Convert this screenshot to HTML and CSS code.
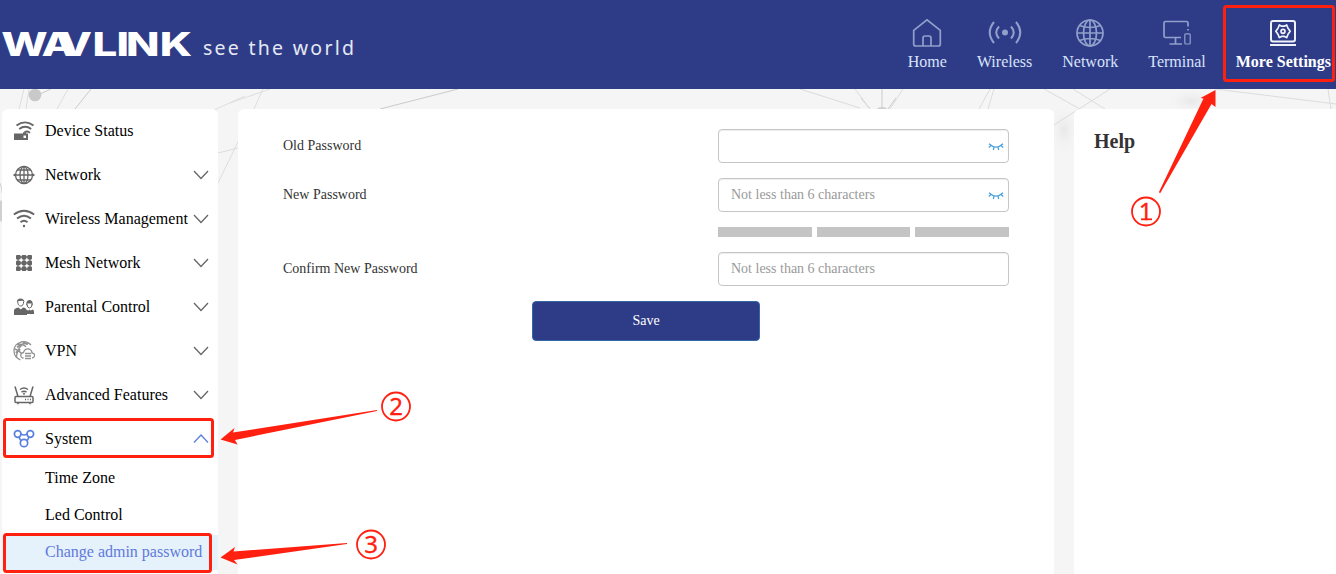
FILE: index.html
```html
<!DOCTYPE html>
<html lang="en">
<head>
<meta charset="utf-8">
<title>WAVLINK</title>
<link rel="stylesheet" href="styles.css">
</head>
<body>
<svg class="backdrop" viewBox="0 0 1336 574" aria-hidden="true">
  <defs><radialGradient id="haze"><stop offset="0" stop-color="#e8e8e8"/><stop offset="1" stop-color="#f4f4f4" stop-opacity="0"/></radialGradient></defs>
  <ellipse cx="1192" cy="101" rx="26" ry="14" fill="url(#haze)"/>
  <ellipse cx="1064" cy="130" rx="16" ry="26" fill="url(#haze)"/>
  <g fill="none" stroke="#dedede">
    <path d="M24 89 19 109M29 89 26 109M68 89 57 109M263 89 254 109 218 183M218 153 238 148M230 103 270 89M214 110 245 96"/>
    <path stroke="#cbcbcb" d="M91 89 75 109M40 94 51 89M380 109 458 89M861 98 870 109M896 98 888 109M882 89V109"/>
    <path d="M1044 89 1080 109M1073 89 1105 109M1054 125 1110 89M1328 89 1331 109M1215 89 1336 104M903 89 890 109M855 89 870 109M990 89 979 109M994 89 988 109M800 89 860 108" stroke="#dcdcdc"/>
  </g>
  <circle cx="35" cy="95" r="6.3" fill="#c9c9c9"/><circle cx="882" cy="115" r="8" fill="#cfcfcf"/>
  <path d="M0 183q2 4 2 10M0 201h2v20H0z" fill="#c9c9c9" stroke="#d6d6d6"/>
</svg>

<header class="header">
  <svg class="logo" width="360" height="40" viewBox="0 24 360 40">
    <text class="brand" transform="scale(1.33 1)" y="55.700" x="1 31.200 43.800 69.500 87.600 94.700 120.200">W<tspan class="cut">A</tspan>VLINK</text>
    <text class="tagline" x="203" y="54.500" textLength="151" lengthAdjust="spacing">see the world</text>
  </svg>
  <nav class="nav">
    <a class="nav-item"><svg width="30" height="30" viewBox="0 0 30 30"><path d="M1.700 12.400 15 1.900l13.300 10.500V26q0 2-2 2H3.700q-2 0-2-2zM11 28V20q0-2 2-2h4q2 0 2 2v8"/></svg>Home</a>
    <a class="nav-item"><svg width="34" height="30" viewBox="0 0 34 30"><g stroke-width="2"><path d="M6 4Q-2.500 14.500 6 25M11 8.500Q5.500 14.500 11 20.500M28 4Q36.500 14.500 28 25M23 8.500Q28.500 14.500 23 20.500"/></g><circle class="solid" cx="17" cy="14.500" r="3"/></svg>Wireless</a>
    <a class="nav-item"><svg width="30" height="30" viewBox="0 0 30 30"><circle cx="15" cy="15" r="13"/><ellipse cx="15" cy="15" rx="6.500" ry="13"/><path d="M15 2v26M2 15h26M4.500 7.500q10.500 4 21 0M4.500 22.500q10.500-4 21 0"/></svg>Network</a>
    <a class="nav-item"><svg width="30" height="30" viewBox="0 0 30 30"><path d="M26 8.500V5q0-1.500-1.500-1.500H3.500Q2 3.500 2 5v13q0 1.500 1.500 1.500H19M13.500 19.500V26M7.500 26H20M26 11v1.500"/><rect x="22.800" y="15.800" width="5.400" height="10.200" rx="1" stroke-width="1.200"/></svg>Terminal</a>
    <a class="nav-item current"><svg width="30" height="30" viewBox="0 0 30 30"><g stroke-width="2"><rect x="3" y="3" width="24" height="20.500" rx="2"/><path d="M2 27h26"/><path stroke-width="1.700" stroke-linejoin="round" d="M11.300 7 13.600 8.200h2.800L18.700 7l1.300 3.300 2.200 3-2.200 3-1.300 3.300-2.300-1.200h-2.800l-2.300 1.200L10 16.300l-2.200-3 2.200-3z"/><circle cx="15" cy="13.300" r="2" stroke-width="1.700"/></g></svg>More Settings</a>
  </nav>
</header>

<main class="layout">
  <aside class="sidebar">
    <a class="item"><svg class="ico" viewBox="0 0 22 22"><path d="M3.500 5.500Q12-.8 20.500 5.500M6.200 9q6-4.500 12 0M11.500 12.300q3-2 5.500.500" stroke-width="1.900"/><path class="fill" fill-rule="evenodd" d="M1 13.500h9v-1.200h3v1.200h2V20H1zM10.500 15.500V18H13v-2.500z"/></svg>Device Status</a>
    <a class="item"><svg class="ico" viewBox="0 0 22 22"><circle cx="11" cy="11" r="8.500"/><ellipse cx="11" cy="11" rx="4" ry="8.500"/><path d="M11 2v18M2 11h18M4 6h14M4 16h14"/><circle class="fill" cx="1.700" cy="11" r="1.300"/><circle class="fill" cx="20.300" cy="11" r="1.300"/></svg>Network<svg class="chev" viewBox="0 0 16 10"><path d="m1 1 7 7.500L15 1"/></svg></a>
    <a class="item"><svg class="ico" viewBox="0 0 22 22"><path stroke-width="1.800" d="M.8 6.500q10.200-7.500 20.400 0M4 10.500q7-5.500 14 0M7.500 14.300q3.500-3 7 0"/><circle class="fill" cx="11" cy="18" r="1.200"/></svg>Wireless Management<svg class="chev" viewBox="0 0 16 10"><path d="m1 1 7 7.500L15 1"/></svg></a>
    <a class="item"><svg class="ico" viewBox="0 0 22 22"><path d="M5 5h12v12H5zM5 11h12M11 5v12"/><g class="fill"><rect x="3" y="3" width="4.600" height="4.600" rx="1"/><rect x="8.700" y="3" width="4.600" height="4.600" rx="1"/><rect x="14.400" y="3" width="4.600" height="4.600" rx="1"/><rect x="3" y="8.700" width="4.600" height="4.600" rx="1"/><rect x="8.700" y="8.700" width="4.600" height="4.600" rx="1"/><rect x="14.400" y="8.700" width="4.600" height="4.600" rx="1"/><rect x="3" y="14.400" width="4.600" height="4.600" rx="1"/><rect x="8.700" y="14.400" width="4.600" height="4.600" rx="1"/><rect x="14.400" y="14.400" width="4.600" height="4.600" rx="1"/></g></svg>Mesh Network<svg class="chev" viewBox="0 0 16 10"><path d="m1 1 7 7.500L15 1"/></svg></a>
    <a class="item"><svg class="ico" viewBox="0 0 22 22"><path stroke-width="1" d="M4.800 5.500Q4.800 10 7.700 10t2.900-4.500M14 8q0 4 2.500 4T19 8"/><path class="fill" d="M1 19v-4.500q0-2 4.500-3l2.300 2 2.200-2q3.500.5 3.500 2.500l2 .500 1-1 1 1 2.500-1q1 .5 1 2.500v2H14V19zM3.800 6Q4 2.500 7.500 2.500T11.500 6L9.500 4.800 6 5zM13.300 10V7q.7-3 3.200-3t3.200 3v3L18.500 7.500h-4z"/></svg>Parental Control<svg class="chev" viewBox="0 0 16 10"><path d="m1 1 7 7.500L15 1"/></svg></a>
    <a class="item vpn"><svg class="ico" viewBox="0 0 22 22"><path d="M18 5Q14 .5 8 2 1 4 1 11q0 6 6.500 9M4 4q7 0 9 3M12 2Q4 8 3.500 17M2 9q4 1 7 5"/><path stroke-width="2.200" d="M4 7 9 5M3 13l4-4M10 3l5 1"/><path d="M10.500 18H9.500Q7 17 8 14q1-1.500 2.500-1.500Q12 8 16 9q3 1 3 4 3 .5 2.500 3-.5 2-2.500 2M12 13.500h6M12 16h6M12 18.500h6"/></svg>VPN<svg class="chev" viewBox="0 0 16 10"><path d="m1 1 7 7.500L15 1"/></svg></a>
    <a class="item"><svg class="ico" viewBox="0 0 22 22"><path stroke-width="1.500" d="M3 12.500h16q1 0 1 1v4q0 1-1 1H3q-1 0-1-1v-4q0-1 1-1M5 12.500 2 2.500M17 12.500l3-10M5 18.500v1.700M17 18.500v1.700M12 15.500h1M14.500 15.500h1M17 15.500h1M7 5.500q4-3 8 0M8.500 8.200q2.500-2 5 0"/><circle class="fill" cx="11" cy="9.800" r="1"/></svg>Advanced Features<svg class="chev" viewBox="0 0 16 10"><path d="m1 1 7 7.500L15 1"/></svg></a>
    <a class="item open"><svg class="ico" viewBox="0 0 22 22"><g stroke-width="1.700"><circle cx="4.700" cy="6" r="3.300"/><circle cx="17.300" cy="6" r="3.300"/><circle cx="11" cy="15" r="3.700"/><path d="M8 6q3 2 6 0M6 9q1 3 2.500 4M16 9q-1 3-2.500 4"/></g></svg>System<svg class="chev" viewBox="0 0 16 10"><path d="M1 8.500 8 1l7 7.500"/></svg></a>
    <div class="submenu">
      <a class="sub">Time Zone</a>
      <a class="sub">Led Control</a>
      <a class="sub active">Change admin password</a>
    </div>
  </aside>

  <section class="panel">
    <div class="row"><label>Old Password</label><div class="field"><svg class="eye" viewBox="0 0 16 8"><path d="M1 .8Q8 7.500 15 .8M3 2.500.800 4.500M13 2.500l2.200 2M6 4.200 5.300 7M10 4.200l.7 2.800"/></svg></div></div>
    <div class="row"><label>New Password</label><div class="field">Not less than 6 characters<svg class="eye" viewBox="0 0 16 8"><path d="M1 .8Q8 7.500 15 .8M3 2.500.800 4.500M13 2.500l2.200 2M6 4.200 5.300 7M10 4.200l.7 2.800"/></svg></div></div>
    <div class="strength"><i></i><i></i><i></i></div>
    <div class="row"><label>Confirm New Password</label><div class="field">Not less than 6 characters</div></div>
    <button class="save">Save</button>
  </section>

  <section class="help"><h2>Help</h2></section>
</main>

<svg class="notes" viewBox="0 0 1336 574">
  <g class="frames">
    <rect x="1224.500" y="6.500" width="109" height="74" rx="2"/>
    <rect x="4.500" y="419.500" width="208" height="37" rx="2"/>
    <rect x="4.500" y="534.500" width="206" height="37" rx="2"/>
  </g>
  <path d="M1215.500 90 1215.500 107 1211.500 104 1160 193.500 1159 192 1203.500 98.500 1200.500 98z"/>
  <path d="M220.500 439.500 234.500 428 233 432.500 377 410 377 411 235 440 237.500 444.500z"/>
  <path d="M220.500 557.500 235 547 233.500 551.500 347 543 347 544 234 560 237.500 564.500z"/>
  <g class="rings">
    <circle cx="1146" cy="211.500" r="14"/>
    <circle cx="396" cy="406.500" r="14"/>
    <circle cx="371" cy="544.500" r="14"/>
  </g>
  <path class="foot" d="M1141 219.300h11"/>
  <text x="1145.500" y="220">1</text>
  <text x="396" y="415">2</text>
  <text x="371" y="553">3</text>
</svg>
</body>
</html>
```
FILE: styles.css
```css
* { box-sizing: border-box; }
body {
  margin: 0;
  height: 574px;
  overflow: hidden;
  background: #f5f5f5;
  font-family: "Liberation Serif", serif;
  font-size: 16px;
}
.backdrop, .notes { position: absolute; left: 0; top: 0; width: 1336px; height: 574px; }
.notes { z-index: 1; fill: #ff2010; pointer-events: none; }
.frames { fill: none; stroke: #ff2010; stroke-width: 3; }
.rings, .foot { fill: none; stroke: #ff2010; stroke-width: 1.8; }
.notes text { font: 24px "Noto Sans", sans-serif; text-anchor: middle; stroke: #ff2010; stroke-width: .3; }

.header {
  position: relative;
  height: 89px;
  padding-right: 5px;
  background: #2e3c88;
  display: flex;
  justify-content: space-between;
}
.logo { margin-top: 24px; fill: #fff; }
.brand { font: 800 33px Inter, sans-serif; }
.brand .cut { stroke: #2e3c88; stroke-width: 2; paint-order: stroke; }
.tagline { font: 19.5px "Noto Sans", sans-serif; fill: #e5e8f3; }
.nav { display: flex; gap: 30px; padding-top: 18px; }
.nav-item {
  display: flex;
  flex-direction: column;
  align-items: center;
  gap: 5px;
  line-height: 18px;
  color: #d9e3fb;
}
.nav-item svg { fill: none; stroke: #91a0ca; stroke-width: 1.7; }
.nav-item .solid { fill: #91a0ca; stroke: none; }
.nav-item.current { color: #fff; font-weight: bold; }
.nav-item.current svg { stroke: #f0f2fa; }

.layout {
  position: relative;
  display: grid;
  grid-template-columns: 216px 816px 1fr;
  gap: 20px;
  height: 485px;
  padding: 20px 0 0 2px;
}
.sidebar, .panel, .help { background: #fff; border-radius: 6px 6px 0 0; }
.help { border-radius: 6px 0 0 0; padding: 20px; }
.help h2 { margin: 0; font-size: 20px; line-height: 24px; color: #333; }

.item { display: flex; align-items: center; height: 44px; padding: 0 9px 0 11px; color: #000; white-space: nowrap; }
.ico { width: 22px; height: 22px; margin-right: 10px; fill: none; stroke: #666; stroke-width: 1.3; }
.ico .fill { fill: #666; stroke: none; }
.vpn .ico { stroke: #929292; }
.chev { width: 16px; height: 10px; margin-left: auto; fill: none; stroke: #666; stroke-width: 1.3; }
.open .ico, .open .chev { stroke: #5b7fdf; }
.submenu { display: grid; gap: 2px; }
.sub { height: 35px; padding-left: 43px; line-height: 33px; }
.sub.active { background: #e5f1fb; color: #6079dc; }

.panel { padding: 20px 45px 0; font-size: 14px; color: #333; }
.row { display: flex; justify-content: space-between; margin-bottom: 15px; }
.row label { line-height: 33px; }
.field {
  display: flex;
  align-items: center;
  width: 291px;
  height: 34px;
  padding: 0 4px 0 12px;
  border: 1px solid #c6c6c6;
  border-radius: 4px;
  box-shadow: inset 0 1px 1px rgba(0, 0, 0, .07);
  color: #999;
}
.eye { width: 16px; height: 8px; margin: 1px 0 0 auto; fill: none; stroke: #4ca3df; stroke-width: 1.3; }
.strength { display: grid; grid-template-columns: repeat(3, 1fr); gap: 5px; width: 291px; margin: 0 0 15px auto; }
.strength i { height: 10px; background: #c4c4c4; }
.save {
  display: block;
  width: 228px;
  height: 40px;
  margin: 0 auto;
  padding: 0 0 1px;
  border: 1px solid #3467a5;
  border-radius: 4px;
  background: #2e3c88;
  color: #fff;
  font: 14px "Liberation Serif", serif;
}
```
